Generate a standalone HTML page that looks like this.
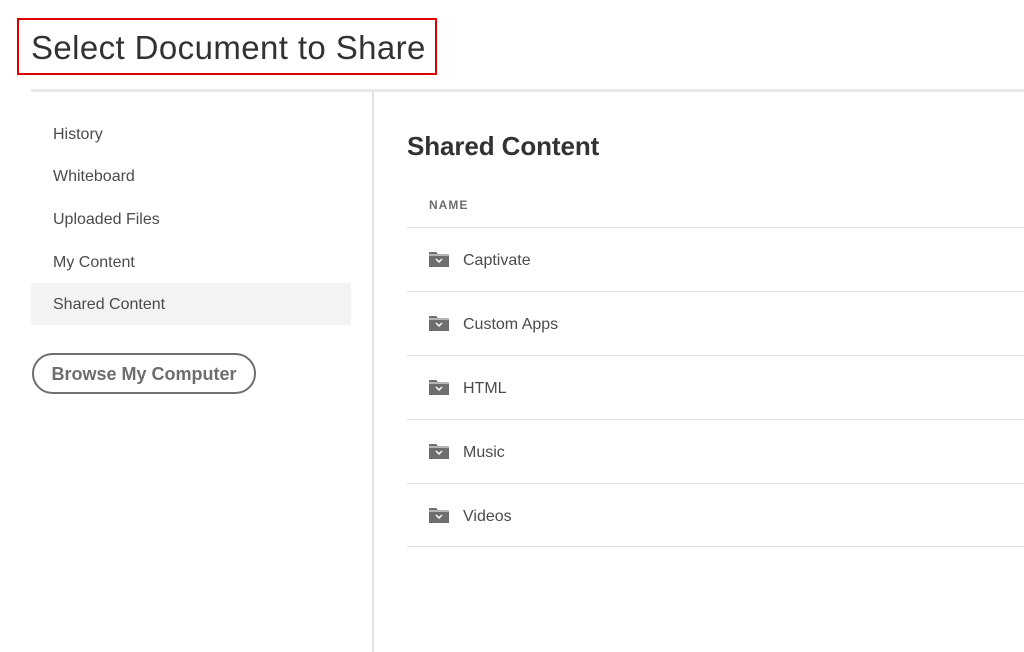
<!DOCTYPE html>
<html><head><meta charset="utf-8"><style>
*{margin:0;padding:0;box-sizing:border-box}
body{width:1024px;height:651px;background:#fff;font-family:"Liberation Sans",sans-serif;position:relative;overflow:hidden;color:#4b4b4b}
.title{position:absolute;left:17px;top:18px;width:420px;height:57px;border:2px solid #e00000}
.title span{position:absolute;left:12px;top:9px;font-size:33px;color:#323232;white-space:nowrap;letter-spacing:0.4px}
.hl{position:absolute;left:31px;top:89px;width:993px;height:3px;background:#e8e8e8}
.vl{position:absolute;left:372px;top:92px;width:2px;height:560px;background:#e3e3e3}
.nav{position:absolute;left:53px;font-size:16px;color:#4b4b4b}
.sel{position:absolute;left:31px;top:283px;width:320px;height:42px;background:#f3f3f3}
.btn{position:absolute;left:32px;top:353px;width:224px;height:41px;border:2px solid #707070;border-radius:21px;font-weight:bold;font-size:18px;color:#6e6e6e;text-align:center;line-height:39px}
h2{position:absolute;left:407px;top:131px;font-size:26px;font-weight:bold;color:#323232;letter-spacing:-0.1px}
.name{position:absolute;left:429px;top:198px;font-size:12px;font-weight:bold;letter-spacing:1px;color:#6e6e6e}
.line{position:absolute;left:407px;width:617px;height:1px;background:#e1e1e1}
.row{position:absolute;left:463px;font-size:16px;color:#4b4b4b}
.ic{position:absolute;left:429px}
</style></head><body>
<div class="title"><span>Select Document to Share</span></div>
<div class="hl"></div><div class="vl"></div>
<div class="sel"></div>
<div class="nav" style="top:126px">History</div>
<div class="nav" style="top:168px">Whiteboard</div>
<div class="nav" style="top:211px">Uploaded Files</div>
<div class="nav" style="top:254px">My Content</div>
<div class="nav" style="top:296px">Shared Content</div>
<div class="btn">Browse My Computer</div>
<h2>Shared Content</h2>
<div class="name">NAME</div>
<div class="line" style="top:227px"></div>
<div class="line" style="top:291px"></div>
<div class="line" style="top:355px"></div>
<div class="line" style="top:419px"></div>
<div class="line" style="top:483px"></div>
<div class="line" style="top:546px"></div>
<svg class="ic" style="top:251px" width="20" height="16" viewBox="0 0 20 16"><path d="M0 1h7l2 2h11v13H0z" fill="#6e6e6e"/><path d="M0 4h20" stroke="#fff" stroke-width="1"/><path d="M7 8l3 3 3-3" stroke="#fff" stroke-width="1.5" fill="none"/></svg>
<div class="row" style="top:252px">Captivate</div>
<svg class="ic" style="top:315px" width="20" height="16" viewBox="0 0 20 16"><path d="M0 1h7l2 2h11v13H0z" fill="#6e6e6e"/><path d="M0 4h20" stroke="#fff" stroke-width="1"/><path d="M7 8l3 3 3-3" stroke="#fff" stroke-width="1.5" fill="none"/></svg>
<div class="row" style="top:316px">Custom Apps</div>
<svg class="ic" style="top:379px" width="20" height="16" viewBox="0 0 20 16"><path d="M0 1h7l2 2h11v13H0z" fill="#6e6e6e"/><path d="M0 4h20" stroke="#fff" stroke-width="1"/><path d="M7 8l3 3 3-3" stroke="#fff" stroke-width="1.5" fill="none"/></svg>
<div class="row" style="top:380px">HTML</div>
<svg class="ic" style="top:443px" width="20" height="16" viewBox="0 0 20 16"><path d="M0 1h7l2 2h11v13H0z" fill="#6e6e6e"/><path d="M0 4h20" stroke="#fff" stroke-width="1"/><path d="M7 8l3 3 3-3" stroke="#fff" stroke-width="1.5" fill="none"/></svg>
<div class="row" style="top:444px">Music</div>
<svg class="ic" style="top:507px" width="20" height="16" viewBox="0 0 20 16"><path d="M0 1h7l2 2h11v13H0z" fill="#6e6e6e"/><path d="M0 4h20" stroke="#fff" stroke-width="1"/><path d="M7 8l3 3 3-3" stroke="#fff" stroke-width="1.5" fill="none"/></svg>
<div class="row" style="top:508px">Videos</div>
</body></html>
